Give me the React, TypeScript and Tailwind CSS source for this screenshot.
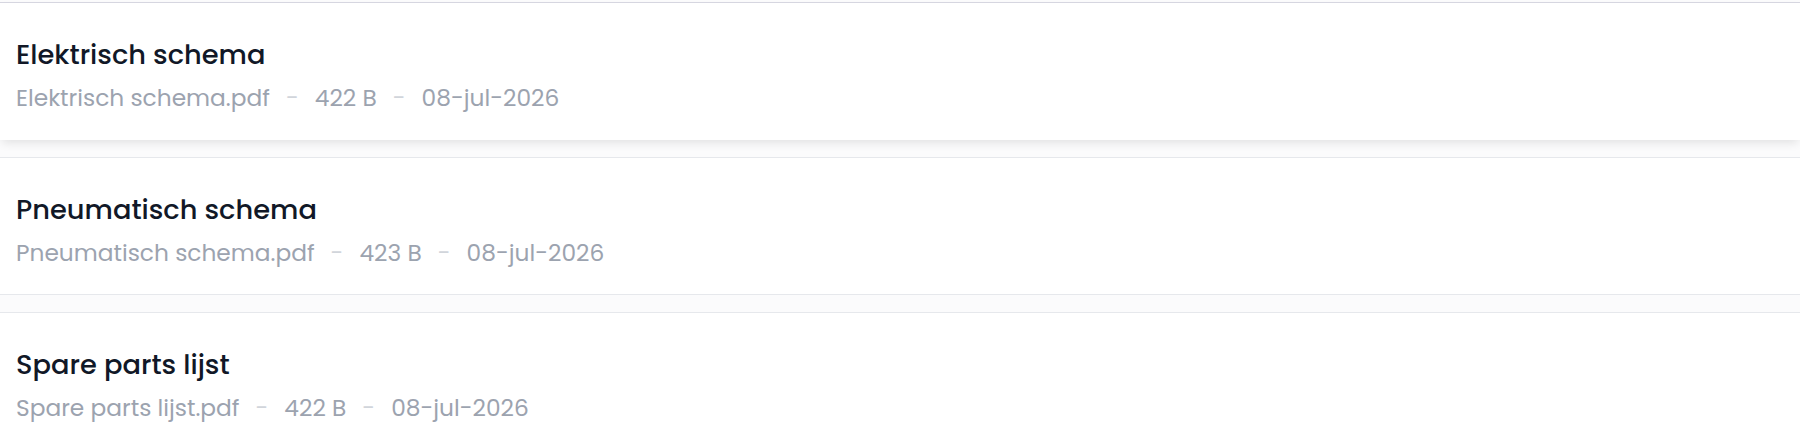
import React from "react";

type Doc = {
    title: string;
    file: string;
    size: string;
    date: string;
};

const docs: Doc[] = [
    { title: "Elektrisch schema", file: "Elektrisch schema.pdf", size: "422 B", date: "08-jul-2026" },
    { title: "Pneumatisch schema", file: "Pneumatisch schema.pdf", size: "423 B", date: "08-jul-2026" },
    { title: "Spare parts lijst", file: "Spare parts lijst.pdf", size: "422 B", date: "08-jul-2026" },
];

function DocRow({ doc, active }: { doc: Doc; active?: boolean }) {
    return (
        <div
            className={`bg-white px-4 pt-[31px] pb-[24px] border-y ${
                active
                    ? "border-t-[#d6d6e0] border-b-transparent shadow-[0_5px_9px_-2px_rgba(0,0,0,0.1)]"
                    : "border-[#e6e8ec]"
            }`}
        >
            <h3 className="text-[27.3px] leading-[42px] font-medium text-[#111827]">{doc.title}</h3>
            <div className="mt-[5px] flex items-center text-[23.3px] leading-[34px] text-[#9ca3af]">
                <span>{doc.file}</span>
                <span className="mx-[16px] text-[#d1d5db]">-</span>
                <span>{doc.size}</span>
                <span className="mx-[16px] text-[#d1d5db]">-</span>
                <span>{doc.date}</span>
            </div>
        </div>
    );
}

export default function App() {
    return (
        <main
            className="min-h-screen bg-[#fbfbfc] pt-[2px]"
            style={{ fontFamily: '"Poppins", "Open Sans", "Noto Sans", sans-serif' }}
        >
            <div className="flex flex-col gap-[17px]">
                {docs.map((doc, index) => (
                    <DocRow key={doc.title} doc={doc} active={index === 0} />
                ))}
            </div>
        </main>
    );
}
